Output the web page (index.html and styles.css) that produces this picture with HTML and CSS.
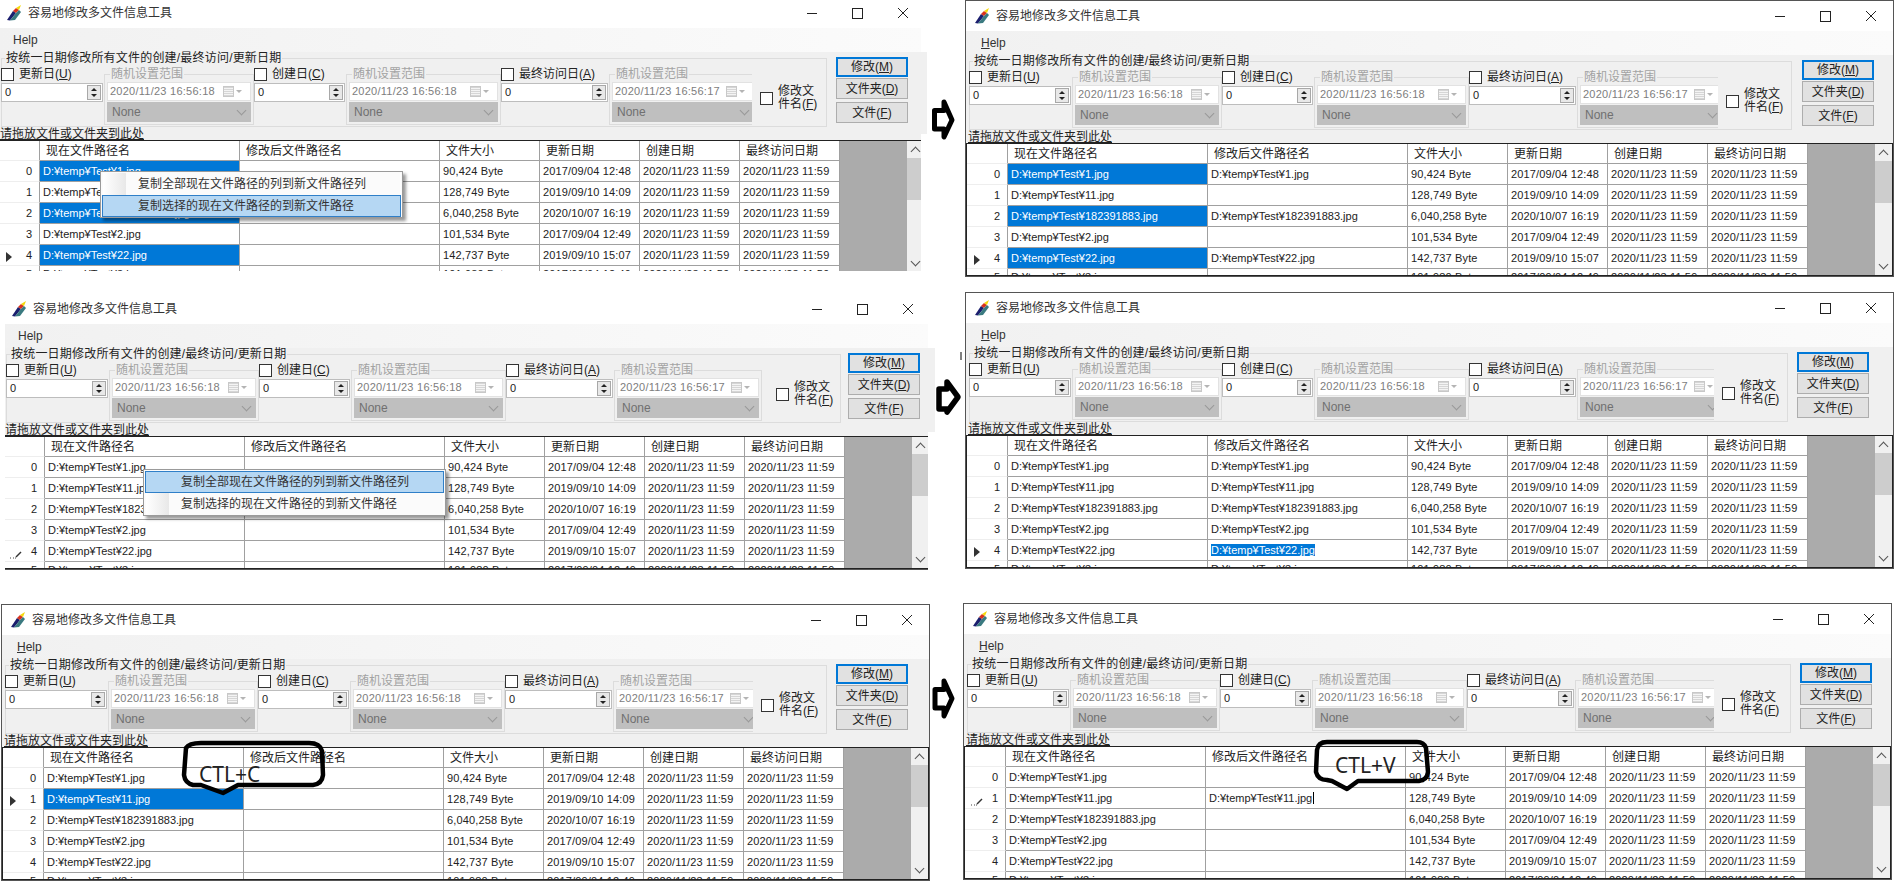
FILE: index.html
```html
<!DOCTYPE html>
<html lang="zh">
<head>
<meta charset="utf-8">
<title>容易地修改多文件信息工具</title>
<link rel="stylesheet" href="styles.css">
</head>
<body>
<svg class="defs" width="0" height="0" aria-hidden="true">
<symbol id="logo" viewBox="0 0 15 16"><path d="M0 15 6 6l3 2-6 7.500z" fill="#1b1f6e"/><path d="M6 6 9 3l3 2-3 3z" fill="#d8321e"/><path d="M9 3 14 0l-2 5z" fill="#f5d90a"/><path d="M3 15.500 9 8l3-3 2 2-6 8z" fill="#3a7a80"/></symbol>
<symbol id="close" viewBox="0 0 10 10"><path d="M0 0 10 10M10 0 0 10" stroke="#222" fill="none"/></symbol>
<symbol id="pencil" viewBox="0 0 12 10"><path d="M0 9h1M3 9h1M5 9h1" stroke="#444"/><path d="M6 8 11 3" stroke="#333" stroke-width="1.500"/></symbol>
</svg>
<main class="canvas">

<section class="win w1">
<header class="title"><svg class="logo"><use href="#logo"/></svg><span>容易地修改多文件信息工具</span><div class="ctrl"><i class="min"></i><i class="max"></i><svg class="x"><use href="#close"/></svg></div></header>
<nav class="menu">Help</nav>
<div class="form"><div class="top">
<fieldset class="fs"><legend>按统一日期修改所有文件的创建/最终访问/更新日期</legend>
<div class="cols">
<div class="dleft a"><label class="chk"><i class="box"></i>更新日(<u>U</u>)</label><div class="num">0<i class="spin"></i></div></div>
<fieldset class="sub a"><legend>随机设置范围</legend><div class="dp">2020/11/23 16:56:18<i class="cal"></i></div><div class="sel">None</div></fieldset>
<div class="dleft b"><label class="chk"><i class="box"></i>创建日(<u>C</u>)</label><div class="num">0<i class="spin"></i></div></div>
<fieldset class="sub b"><legend>随机设置范围</legend><div class="dp">2020/11/23 16:56:18<i class="cal"></i></div><div class="sel">None</div></fieldset>
<div class="dleft c"><label class="chk"><i class="box"></i>最终访问日(<u>A</u>)</label><div class="num">0<i class="spin"></i></div></div>
<fieldset class="sub c"><legend>随机设置范围</legend><div class="dp">2020/11/23 16:56:17<i class="cal"></i></div><div class="sel">None</div></fieldset>
</div>
<label class="ren"><i class="box"></i><span>修改文件名(<u>F</u>)</span></label>
</fieldset>
<div class="btns"><button class="btn def">修改(<u>M</u>)</button><button class="btn">文件夹(<u>D</u>)</button><button class="btn">文件(<u>F</u>)</button></div>
</div><div class="drop">请拖放文件或文件夹到此处</div></div>
<div class="grid"><table>
<tr class="hd"><th class="rh"></th><th>现在文件路径名</th><th>修改后文件路径名</th><th>文件大小</th><th>更新日期</th><th>创建日期</th><th>最终访问日期</th></tr>
<tr><th class="rh">0</th><td class="on">D:¥temp¥Test¥1.jpg</td><td></td><td>90,424 Byte</td><td>2017/09/04 12:48</td><td>2020/11/23 11:59</td><td>2020/11/23 11:59</td></tr>
<tr><th class="rh">1</th><td>D:¥temp¥Test¥11.jpg</td><td></td><td>128,749 Byte</td><td>2019/09/10 14:09</td><td>2020/11/23 11:59</td><td>2020/11/23 11:59</td></tr>
<tr><th class="rh">2</th><td class="on">D:¥temp¥Test¥182391883.jpg</td><td></td><td>6,040,258 Byte</td><td>2020/10/07 16:19</td><td>2020/11/23 11:59</td><td>2020/11/23 11:59</td></tr>
<tr><th class="rh">3</th><td>D:¥temp¥Test¥2.jpg</td><td></td><td>101,534 Byte</td><td>2017/09/04 12:49</td><td>2020/11/23 11:59</td><td>2020/11/23 11:59</td></tr>
<tr><th class="rh"><i class="cur"></i>4</th><td class="on">D:¥temp¥Test¥22.jpg</td><td></td><td>142,737 Byte</td><td>2019/09/10 15:07</td><td>2020/11/23 11:59</td><td>2020/11/23 11:59</td></tr>
<tr><th class="rh">5</th><td>D:¥temp¥Test¥3.jpg</td><td></td><td>101,980 Byte</td><td>2017/09/04 12:49</td><td>2020/11/23 11:59</td><td>2020/11/23 11:59</td></tr>
</table><div class="fill"></div><div class="sb"><i class="up"></i><i class="thumb"></i><i class="dn"></i></div></div>
<div class="cm cm1"><div class="it plain">复制全部现在文件路径的列到新文件路径列</div><div class="it hi">复制选择的现在文件路径的到新文件路径</div></div>
</section>

<section class="win w2">
<header class="title"><svg class="logo"><use href="#logo"/></svg><span>容易地修改多文件信息工具</span><div class="ctrl"><i class="min"></i><i class="max"></i><svg class="x"><use href="#close"/></svg></div></header>
<nav class="menu"><u>H</u>elp</nav>
<div class="form"><div class="top">
<fieldset class="fs"><legend>按统一日期修改所有文件的创建/最终访问/更新日期</legend>
<div class="cols">
<div class="dleft a"><label class="chk"><i class="box"></i>更新日(<u>U</u>)</label><div class="num">0<i class="spin"></i></div></div>
<fieldset class="sub a"><legend>随机设置范围</legend><div class="dp">2020/11/23 16:56:18<i class="cal"></i></div><div class="sel">None</div></fieldset>
<div class="dleft b"><label class="chk"><i class="box"></i>创建日(<u>C</u>)</label><div class="num">0<i class="spin"></i></div></div>
<fieldset class="sub b"><legend>随机设置范围</legend><div class="dp">2020/11/23 16:56:18<i class="cal"></i></div><div class="sel">None</div></fieldset>
<div class="dleft c"><label class="chk"><i class="box"></i>最终访问日(<u>A</u>)</label><div class="num">0<i class="spin"></i></div></div>
<fieldset class="sub c"><legend>随机设置范围</legend><div class="dp">2020/11/23 16:56:17<i class="cal"></i></div><div class="sel">None</div></fieldset>
</div>
<label class="ren"><i class="box"></i><span>修改文件名(<u>F</u>)</span></label>
</fieldset>
<div class="btns"><button class="btn def">修改(<u>M</u>)</button><button class="btn">文件夹(<u>D</u>)</button><button class="btn">文件(<u>F</u>)</button></div>
</div><div class="drop">请拖放文件或文件夹到此处</div></div>
<div class="grid"><table>
<tr class="hd"><th class="rh"></th><th>现在文件路径名</th><th>修改后文件路径名</th><th>文件大小</th><th>更新日期</th><th>创建日期</th><th>最终访问日期</th></tr>
<tr><th class="rh">0</th><td class="on">D:¥temp¥Test¥1.jpg</td><td>D:¥temp¥Test¥1.jpg</td><td>90,424 Byte</td><td>2017/09/04 12:48</td><td>2020/11/23 11:59</td><td>2020/11/23 11:59</td></tr>
<tr><th class="rh">1</th><td>D:¥temp¥Test¥11.jpg</td><td></td><td>128,749 Byte</td><td>2019/09/10 14:09</td><td>2020/11/23 11:59</td><td>2020/11/23 11:59</td></tr>
<tr><th class="rh">2</th><td class="on">D:¥temp¥Test¥182391883.jpg</td><td>D:¥temp¥Test¥182391883.jpg</td><td>6,040,258 Byte</td><td>2020/10/07 16:19</td><td>2020/11/23 11:59</td><td>2020/11/23 11:59</td></tr>
<tr><th class="rh">3</th><td>D:¥temp¥Test¥2.jpg</td><td></td><td>101,534 Byte</td><td>2017/09/04 12:49</td><td>2020/11/23 11:59</td><td>2020/11/23 11:59</td></tr>
<tr><th class="rh"><i class="cur"></i>4</th><td class="on">D:¥temp¥Test¥22.jpg</td><td>D:¥temp¥Test¥22.jpg</td><td>142,737 Byte</td><td>2019/09/10 15:07</td><td>2020/11/23 11:59</td><td>2020/11/23 11:59</td></tr>
<tr><th class="rh">5</th><td>D:¥temp¥Test¥3.jpg</td><td></td><td>101,980 Byte</td><td>2017/09/04 12:49</td><td>2020/11/23 11:59</td><td>2020/11/23 11:59</td></tr>
</table><div class="fill"></div><div class="sb"><i class="up"></i><i class="thumb"></i><i class="dn"></i></div></div>
</section>

<section class="win w3">
<header class="title"><svg class="logo"><use href="#logo"/></svg><span>容易地修改多文件信息工具</span><div class="ctrl"><i class="min"></i><i class="max"></i><svg class="x"><use href="#close"/></svg></div></header>
<nav class="menu">Help</nav>
<div class="form"><div class="top">
<fieldset class="fs"><legend>按统一日期修改所有文件的创建/最终访问/更新日期</legend>
<div class="cols">
<div class="dleft a"><label class="chk"><i class="box"></i>更新日(<u>U</u>)</label><div class="num">0<i class="spin"></i></div></div>
<fieldset class="sub a"><legend>随机设置范围</legend><div class="dp">2020/11/23 16:56:18<i class="cal"></i></div><div class="sel">None</div></fieldset>
<div class="dleft b"><label class="chk"><i class="box"></i>创建日(<u>C</u>)</label><div class="num">0<i class="spin"></i></div></div>
<fieldset class="sub b"><legend>随机设置范围</legend><div class="dp">2020/11/23 16:56:18<i class="cal"></i></div><div class="sel">None</div></fieldset>
<div class="dleft c"><label class="chk"><i class="box"></i>最终访问日(<u>A</u>)</label><div class="num">0<i class="spin"></i></div></div>
<fieldset class="sub c"><legend>随机设置范围</legend><div class="dp">2020/11/23 16:56:17<i class="cal"></i></div><div class="sel">None</div></fieldset>
</div>
<label class="ren"><i class="box"></i><span>修改文件名(<u>F</u>)</span></label>
</fieldset>
<div class="btns"><button class="btn def">修改(<u>M</u>)</button><button class="btn">文件夹(<u>D</u>)</button><button class="btn">文件(<u>F</u>)</button></div>
</div><div class="drop">请拖放文件或文件夹到此处</div></div>
<div class="grid"><table>
<tr class="hd"><th class="rh"></th><th>现在文件路径名</th><th>修改后文件路径名</th><th>文件大小</th><th>更新日期</th><th>创建日期</th><th>最终访问日期</th></tr>
<tr><th class="rh">0</th><td>D:¥temp¥Test¥1.jpg</td><td></td><td>90,424 Byte</td><td>2017/09/04 12:48</td><td>2020/11/23 11:59</td><td>2020/11/23 11:59</td></tr>
<tr><th class="rh">1</th><td>D:¥temp¥Test¥11.jpg</td><td></td><td>128,749 Byte</td><td>2019/09/10 14:09</td><td>2020/11/23 11:59</td><td>2020/11/23 11:59</td></tr>
<tr><th class="rh">2</th><td>D:¥temp¥Test¥182391883.jpg</td><td></td><td>6,040,258 Byte</td><td>2020/10/07 16:19</td><td>2020/11/23 11:59</td><td>2020/11/23 11:59</td></tr>
<tr><th class="rh">3</th><td>D:¥temp¥Test¥2.jpg</td><td></td><td>101,534 Byte</td><td>2017/09/04 12:49</td><td>2020/11/23 11:59</td><td>2020/11/23 11:59</td></tr>
<tr><th class="rh"><svg class="pen"><use href="#pencil"/></svg>4</th><td>D:¥temp¥Test¥22.jpg</td><td></td><td>142,737 Byte</td><td>2019/09/10 15:07</td><td>2020/11/23 11:59</td><td>2020/11/23 11:59</td></tr>
<tr><th class="rh">5</th><td>D:¥temp¥Test¥3.jpg</td><td></td><td>101,980 Byte</td><td>2017/09/04 12:49</td><td>2020/11/23 11:59</td><td>2020/11/23 11:59</td></tr>
</table><div class="fill"></div><div class="sb"><i class="up"></i><i class="thumb"></i><i class="dn"></i></div></div>
<div class="cm cm3"><div class="it hi">复制全部现在文件路径的列到新文件路径列</div><div class="it plain">复制选择的现在文件路径的到新文件路径</div></div>
</section>

<section class="win w4">
<header class="title"><svg class="logo"><use href="#logo"/></svg><span>容易地修改多文件信息工具</span><div class="ctrl"><i class="min"></i><i class="max"></i><svg class="x"><use href="#close"/></svg></div></header>
<nav class="menu"><u>H</u>elp</nav>
<div class="form"><div class="top">
<fieldset class="fs"><legend>按统一日期修改所有文件的创建/最终访问/更新日期</legend>
<div class="cols">
<div class="dleft a"><label class="chk"><i class="box"></i>更新日(<u>U</u>)</label><div class="num">0<i class="spin"></i></div></div>
<fieldset class="sub a"><legend>随机设置范围</legend><div class="dp">2020/11/23 16:56:18<i class="cal"></i></div><div class="sel">None</div></fieldset>
<div class="dleft b"><label class="chk"><i class="box"></i>创建日(<u>C</u>)</label><div class="num">0<i class="spin"></i></div></div>
<fieldset class="sub b"><legend>随机设置范围</legend><div class="dp">2020/11/23 16:56:18<i class="cal"></i></div><div class="sel">None</div></fieldset>
<div class="dleft c"><label class="chk"><i class="box"></i>最终访问日(<u>A</u>)</label><div class="num">0<i class="spin"></i></div></div>
<fieldset class="sub c"><legend>随机设置范围</legend><div class="dp">2020/11/23 16:56:17<i class="cal"></i></div><div class="sel">None</div></fieldset>
</div>
<label class="ren"><i class="box"></i><span>修改文件名(<u>F</u>)</span></label>
</fieldset>
<div class="btns"><button class="btn def">修改(<u>M</u>)</button><button class="btn">文件夹(<u>D</u>)</button><button class="btn">文件(<u>F</u>)</button></div>
</div><div class="drop">请拖放文件或文件夹到此处</div></div>
<div class="grid"><table>
<tr class="hd"><th class="rh"></th><th>现在文件路径名</th><th>修改后文件路径名</th><th>文件大小</th><th>更新日期</th><th>创建日期</th><th>最终访问日期</th></tr>
<tr><th class="rh">0</th><td>D:¥temp¥Test¥1.jpg</td><td>D:¥temp¥Test¥1.jpg</td><td>90,424 Byte</td><td>2017/09/04 12:48</td><td>2020/11/23 11:59</td><td>2020/11/23 11:59</td></tr>
<tr><th class="rh">1</th><td>D:¥temp¥Test¥11.jpg</td><td>D:¥temp¥Test¥11.jpg</td><td>128,749 Byte</td><td>2019/09/10 14:09</td><td>2020/11/23 11:59</td><td>2020/11/23 11:59</td></tr>
<tr><th class="rh">2</th><td>D:¥temp¥Test¥182391883.jpg</td><td>D:¥temp¥Test¥182391883.jpg</td><td>6,040,258 Byte</td><td>2020/10/07 16:19</td><td>2020/11/23 11:59</td><td>2020/11/23 11:59</td></tr>
<tr><th class="rh">3</th><td>D:¥temp¥Test¥2.jpg</td><td>D:¥temp¥Test¥2.jpg</td><td>101,534 Byte</td><td>2017/09/04 12:49</td><td>2020/11/23 11:59</td><td>2020/11/23 11:59</td></tr>
<tr><th class="rh"><i class="cur"></i>4</th><td>D:¥temp¥Test¥22.jpg</td><td><span class="hl">D:¥temp¥Test¥22.jpg</span></td><td>142,737 Byte</td><td>2019/09/10 15:07</td><td>2020/11/23 11:59</td><td>2020/11/23 11:59</td></tr>
<tr><th class="rh">5</th><td>D:¥temp¥Test¥3.jpg</td><td>D:¥temp¥Test¥3.jpg</td><td>101,980 Byte</td><td>2017/09/04 12:49</td><td>2020/11/23 11:59</td><td>2020/11/23 11:59</td></tr>
</table><div class="fill"></div><div class="sb"><i class="up"></i><i class="thumb"></i><i class="dn"></i></div></div>
</section>

<section class="win w5">
<header class="title"><svg class="logo"><use href="#logo"/></svg><span>容易地修改多文件信息工具</span><div class="ctrl"><i class="min"></i><i class="max"></i><svg class="x"><use href="#close"/></svg></div></header>
<nav class="menu"><u>H</u>elp</nav>
<div class="form"><div class="top">
<fieldset class="fs"><legend>按统一日期修改所有文件的创建/最终访问/更新日期</legend>
<div class="cols">
<div class="dleft a"><label class="chk"><i class="box"></i>更新日(<u>U</u>)</label><div class="num">0<i class="spin"></i></div></div>
<fieldset class="sub a"><legend>随机设置范围</legend><div class="dp">2020/11/23 16:56:18<i class="cal"></i></div><div class="sel">None</div></fieldset>
<div class="dleft b"><label class="chk"><i class="box"></i>创建日(<u>C</u>)</label><div class="num">0<i class="spin"></i></div></div>
<fieldset class="sub b"><legend>随机设置范围</legend><div class="dp">2020/11/23 16:56:18<i class="cal"></i></div><div class="sel">None</div></fieldset>
<div class="dleft c"><label class="chk"><i class="box"></i>最终访问日(<u>A</u>)</label><div class="num">0<i class="spin"></i></div></div>
<fieldset class="sub c"><legend>随机设置范围</legend><div class="dp">2020/11/23 16:56:17<i class="cal"></i></div><div class="sel">None</div></fieldset>
</div>
<label class="ren"><i class="box"></i><span>修改文件名(<u>F</u>)</span></label>
</fieldset>
<div class="btns"><button class="btn def">修改(<u>M</u>)</button><button class="btn">文件夹(<u>D</u>)</button><button class="btn">文件(<u>F</u>)</button></div>
</div><div class="drop">请拖放文件或文件夹到此处</div></div>
<div class="grid"><table>
<tr class="hd"><th class="rh"></th><th>现在文件路径名</th><th>修改后文件路径名</th><th>文件大小</th><th>更新日期</th><th>创建日期</th><th>最终访问日期</th></tr>
<tr><th class="rh">0</th><td>D:¥temp¥Test¥1.jpg</td><td></td><td>90,424 Byte</td><td>2017/09/04 12:48</td><td>2020/11/23 11:59</td><td>2020/11/23 11:59</td></tr>
<tr><th class="rh"><i class="cur"></i>1</th><td class="on">D:¥temp¥Test¥11.jpg</td><td></td><td>128,749 Byte</td><td>2019/09/10 14:09</td><td>2020/11/23 11:59</td><td>2020/11/23 11:59</td></tr>
<tr><th class="rh">2</th><td>D:¥temp¥Test¥182391883.jpg</td><td></td><td>6,040,258 Byte</td><td>2020/10/07 16:19</td><td>2020/11/23 11:59</td><td>2020/11/23 11:59</td></tr>
<tr><th class="rh">3</th><td>D:¥temp¥Test¥2.jpg</td><td></td><td>101,534 Byte</td><td>2017/09/04 12:49</td><td>2020/11/23 11:59</td><td>2020/11/23 11:59</td></tr>
<tr><th class="rh">4</th><td>D:¥temp¥Test¥22.jpg</td><td></td><td>142,737 Byte</td><td>2019/09/10 15:07</td><td>2020/11/23 11:59</td><td>2020/11/23 11:59</td></tr>
<tr><th class="rh">5</th><td>D:¥temp¥Test¥3.jpg</td><td></td><td>101,980 Byte</td><td>2017/09/04 12:49</td><td>2020/11/23 11:59</td><td>2020/11/23 11:59</td></tr>
</table><div class="fill"></div><div class="sb"><i class="up"></i><i class="thumb"></i><i class="dn"></i></div></div>
</section>

<section class="win w6">
<header class="title"><svg class="logo"><use href="#logo"/></svg><span>容易地修改多文件信息工具</span><div class="ctrl"><i class="min"></i><i class="max"></i><svg class="x"><use href="#close"/></svg></div></header>
<nav class="menu"><u>H</u>elp</nav>
<div class="form"><div class="top">
<fieldset class="fs"><legend>按统一日期修改所有文件的创建/最终访问/更新日期</legend>
<div class="cols">
<div class="dleft a"><label class="chk"><i class="box"></i>更新日(<u>U</u>)</label><div class="num">0<i class="spin"></i></div></div>
<fieldset class="sub a"><legend>随机设置范围</legend><div class="dp">2020/11/23 16:56:18<i class="cal"></i></div><div class="sel">None</div></fieldset>
<div class="dleft b"><label class="chk"><i class="box"></i>创建日(<u>C</u>)</label><div class="num">0<i class="spin"></i></div></div>
<fieldset class="sub b"><legend>随机设置范围</legend><div class="dp">2020/11/23 16:56:18<i class="cal"></i></div><div class="sel">None</div></fieldset>
<div class="dleft c"><label class="chk"><i class="box"></i>最终访问日(<u>A</u>)</label><div class="num">0<i class="spin"></i></div></div>
<fieldset class="sub c"><legend>随机设置范围</legend><div class="dp">2020/11/23 16:56:17<i class="cal"></i></div><div class="sel">None</div></fieldset>
</div>
<label class="ren"><i class="box"></i><span>修改文件名(<u>F</u>)</span></label>
</fieldset>
<div class="btns"><button class="btn def">修改(<u>M</u>)</button><button class="btn">文件夹(<u>D</u>)</button><button class="btn">文件(<u>F</u>)</button></div>
</div><div class="drop">请拖放文件或文件夹到此处</div></div>
<div class="grid"><table>
<tr class="hd"><th class="rh"></th><th>现在文件路径名</th><th>修改后文件路径名</th><th>文件大小</th><th>更新日期</th><th>创建日期</th><th>最终访问日期</th></tr>
<tr><th class="rh">0</th><td>D:¥temp¥Test¥1.jpg</td><td></td><td>90,424 Byte</td><td>2017/09/04 12:48</td><td>2020/11/23 11:59</td><td>2020/11/23 11:59</td></tr>
<tr><th class="rh"><svg class="pen"><use href="#pencil"/></svg>1</th><td>D:¥temp¥Test¥11.jpg</td><td><span class="caret">D:¥temp¥Test¥11.jpg</span></td><td>128,749 Byte</td><td>2019/09/10 14:09</td><td>2020/11/23 11:59</td><td>2020/11/23 11:59</td></tr>
<tr><th class="rh">2</th><td>D:¥temp¥Test¥182391883.jpg</td><td></td><td>6,040,258 Byte</td><td>2020/10/07 16:19</td><td>2020/11/23 11:59</td><td>2020/11/23 11:59</td></tr>
<tr><th class="rh">3</th><td>D:¥temp¥Test¥2.jpg</td><td></td><td>101,534 Byte</td><td>2017/09/04 12:49</td><td>2020/11/23 11:59</td><td>2020/11/23 11:59</td></tr>
<tr><th class="rh">4</th><td>D:¥temp¥Test¥22.jpg</td><td></td><td>142,737 Byte</td><td>2019/09/10 15:07</td><td>2020/11/23 11:59</td><td>2020/11/23 11:59</td></tr>
<tr><th class="rh">5</th><td>D:¥temp¥Test¥3.jpg</td><td></td><td>101,980 Byte</td><td>2017/09/04 12:49</td><td>2020/11/23 11:59</td><td>2020/11/23 11:59</td></tr>
</table><div class="fill"></div><div class="sb"><i class="up"></i><i class="thumb"></i><i class="dn"></i></div></div>
</section>

<svg class="arrow a1" viewBox="0 0 44 280"><path d="M0 0H44V280H0V134H6V52H0Z" fill="#fff"/><path d="M13.500 110.500H23V102L31 120L23 137V129H13.500Z" fill="#fff" stroke="#000" stroke-width="5" stroke-linejoin="round"/></svg>
<svg class="arrow a2" viewBox="0 0 37 285"><path d="M0 0H37V285H0V142H8V58H0Z" fill="#fff"/><path d="M11 99H19V92L30 107L19 122V119H11Z" fill="#fff" stroke="#000" stroke-width="5.500" stroke-linejoin="round"/><path d="M33 62v8" stroke="#000"/></svg>
<svg class="arrow a3" viewBox="0 0 30 50"><path d="M5 15.500H14V7L22 24.500L14 42V34H5Z" fill="#fff" stroke="#000" stroke-width="5" stroke-linejoin="round"/></svg>

<div class="callout cc"><svg viewBox="0 0 148 58"><path d="M20 4Q8 4 5 9L3 36Q4 44 12 46L20 46L42 54L57 46H132Q141 45 142 36L141 12Q139 4 128 4Z" fill="none" stroke="#000" stroke-width="4.500" stroke-linejoin="round"/></svg><span>CTL+C</span></div>
<div class="callout cv"><svg viewBox="0 0 118 56"><path d="M14 4Q5 4 4 12L3 34Q5 42 14 42L19 43L34 51L45 43H106Q114 42 115 34L113 10Q111 4 104 4Z" fill="none" stroke="#000" stroke-width="4.500" stroke-linejoin="round"/></svg><span>CTL+V</span></div>
</main>
</body>
</html>
```

FILE: styles.css
```css
* { box-sizing: border-box; }
html, body { margin: 0; padding: 0; background: #fff; }
.defs { position: absolute; }
.canvas {
  position: relative;
  width: 1896px;
  height: 896px;
  overflow: hidden;
  background: #fff;
  font: 12px/14px "Liberation Sans", "Noto Sans CJK JP", sans-serif;
  color: #222;
}

/* windows on the free canvas */
.win {
  position: absolute;
  width: 929px;
  height: 277px;
  border: 1px solid #555;
  background: #fff;
  display: flex;
  flex-direction: column;
}
.w1 { left: -3px; top: -3px; --fw: 826px; --bm: 9px; --clip: 751px; --rm: 8px; clip-path: inset(0 -10px 3px 0); }
.w2 { left: 965px; top: 0; --fw: 823px; --bm: 10px; --clip: 749px; --rm: 8px; }
.w3 { left: 2px; top: 293px; --fw: 835px; --bm: 7px; --clip: 758px; --rm: 12px; clip-path: inset(3px -10px 0 3px); }
.w4 { left: 965px; top: 292px; --fw: 819px; --bm: 9px; --clip: 745px; --rm: 8px; }
.w5 { left: 1px; top: 604px; --fw: 822px; --bm: 9px; --clip: 748px; --rm: 8px; }
.w6 { left: 963px; top: 603px; --fw: 824px; --bm: 9px; --clip: 747px; --rm: 8px; }

.title { flex: none; height: 30px; display: flex; align-items: center; padding: 0 17px 0 9px; background: #fff; color: #333; }
.logo { width: 15px; height: 16px; margin-right: 6px; }
.ctrl { margin-left: auto; display: flex; align-items: center; gap: 35px; }
.min { display: block; width: 10px; height: 1px; background: #222; }
.max { display: block; width: 11px; height: 11px; border: 1px solid #222; }
.x { display: block; width: 10px; height: 10px; }

.menu { flex: none; height: 24px; line-height: 24px; padding-left: 15px; background: linear-gradient(90deg, #f1f1f1, #fbfbfb); color: #333; font-size: 12px; }

.form { flex: none; height: 88px; background: #f0f0f0; display: flex; flex-direction: column; }
.w1 .form { margin-right: -2px; }
.w3 .form { margin-right: -5px; }
.top { height: 75px; flex: none; display: flex; padding-left: 3px; }
.drop { height: 13px; line-height: 15px; padding-left: 2px; text-decoration: underline; white-space: nowrap; }

.fs { flex: none; width: var(--fw); height: 76px; margin: -1px 0 0; padding: 0; border: 1px solid #dcdcdc; display: flex; }
.fs > legend { margin-left: 3px; padding: 0 1px; height: 14px; line-height: 14px; letter-spacing: .2px; white-space: nowrap; }
.cols { flex: none; display: flex; width: var(--clip); height: 60px; margin-left: -1px; overflow: hidden; }

.dleft { flex: none; padding-top: 3px; }
.dleft.a { width: 103px; }
.dleft.b { width: 92px; }
.dleft.c { width: 108px; }
.chk { display: block; height: 13px; line-height: 13px; white-space: nowrap; }
.box { display: block; flex: none; width: 13px; height: 13px; border: 1px solid #333; background: #fff; }
.chk .box { display: inline-block; vertical-align: top; margin-right: 5px; }
.num { position: relative; width: calc(100% - 1px); height: 19px; margin-top: 2px; padding-left: 3px; line-height: 16px; font-size: 11px; background: #fff; border: 1px solid #bdbdbd; }
.spin { position: absolute; right: 1px; top: 1px; width: 14px; height: 15px; background: #e8e8e8; border: 1px solid #a8a8a8; }
.spin::before, .spin::after { content: ""; position: absolute; left: 3px; border-left: 3px solid transparent; border-right: 3px solid transparent; }
.spin::before { top: 2px; border-bottom: 3px solid #222; }
.spin::after { bottom: 2px; border-top: 3px solid #222; }

.sub { flex: none; height: 58px; margin: 2px 0 0; padding: 0 2px; border: 1px solid #dcdcdc; }
.sub.a { width: 150px; }
.sub.b { width: 155px; }
.sub.c { width: 148px; }
.sub > legend { margin-left: 3px; padding: 0 1px; height: 14px; line-height: 14px; color: #a3a3a3; white-space: nowrap; }
.dp { position: relative; height: 19px; margin-top: 1px; padding-left: 2px; line-height: 17px; font-size: 11px; letter-spacing: .25px; color: #7d7d7d; background: #fff; border: 1px solid #e2e2e2; white-space: nowrap; }
.cal { position: absolute; right: 16px; top: 3px; width: 11px; height: 11px; border: 1px solid #c8c8c8; background: repeating-linear-gradient(0deg, #d6d6d6 0 1px, #f4f4f4 1px 2px); }
.cal::after { content: ""; position: absolute; left: 12px; top: 3px; border-left: 3px solid transparent; border-right: 3px solid transparent; border-top: 3px solid #b4b4b4; }
.sel { position: relative; height: 20px; margin-top: 1px; padding-left: 5px; line-height: 20px; font-size: 12px; color: #707070; background: #bfbfbf; }
.sel::after { content: ""; position: absolute; right: 6px; top: 5px; width: 6px; height: 6px; border-right: 1px solid #999; border-bottom: 1px solid #999; transform: rotate(45deg); }

.ren { flex: none; display: flex; gap: 5px; margin-left: var(--rm); padding-top: 20px; }
.ren .box { margin-top: 7px; }
.ren span { display: block; width: 44px; line-height: 13px; }

.btns { flex: none; margin-left: var(--bm); padding-top: 5px; display: flex; flex-direction: column; }
.btn { display: block; width: 72px; height: 21px; padding: 0; font: inherit; line-height: 14px; color: #222; background: #e1e1e1; border: 1px solid #adadad; border-radius: 0; }
.btn.def { height: 20px; border: 2px solid #0078d7; }
.btn + .btn { margin-top: 1px; }
.btn + .btn + .btn { margin-top: 3px; }

.grid { flex: none; height: 133px; display: flex; overflow: hidden; background: #ababab; border: 1px solid #222; }
table { flex: none; width: 841px; height: 132px; border-collapse: separate; border-spacing: 0; table-layout: fixed; background: #fff; }
tr { height: 21px; }
tr.hd { height: 20px; }
th, td { padding: 0; border-right: 1px solid #a0a0a0; border-bottom: 1px solid #a0a0a0; white-space: nowrap; overflow: hidden; }
th { width: 100px; font-weight: 400; text-align: left; padding: 1px 0 0 6px; line-height: 16px; }
tr.hd th:nth-child(1) { width: 41px; }
tr.hd th:nth-child(2), tr.hd th:nth-child(3) { width: 200px; }
th.rh { padding: 0 7px 0 7px; text-align: right; font-size: 11px; border-bottom-color: #eee; }
td { padding-left: 3px; font-size: 11px; letter-spacing: .15px; line-height: 20px; }
td:nth-of-type(1), td:nth-of-type(2) { letter-spacing: 0; }
tr:last-child td, tr:last-child th { vertical-align: top; line-height: 16px; }
td.on { background: #0078d7; color: #fff; }
.hl { background: #0078d7; color: #fff; }
.caret { padding-right: 1px; border-right: 1px solid #000; }
.cur { float: left; margin-top: 5px; border-left: 6px solid #333; border-top: 5px solid transparent; border-bottom: 5px solid transparent; }
.pen { float: left; width: 12px; height: 10px; margin: 6px 0 0 -1px; }

.fill { flex: 1; background: #ababab; }
.sb { flex: none; width: 17px; display: flex; flex-direction: column; background: #f0f0f0; }
.sb i { display: block; flex: none; }
.up, .dn { position: relative; height: 17px; }
.up::after, .dn::after { content: ""; position: absolute; left: 5px; width: 6px; height: 6px; border-left: 1.500px solid #555; border-top: 1.500px solid #555; transform: rotate(45deg); }
.up::after { top: 7px; }
.dn::after { top: 3px; transform: rotate(225deg); }
.thumb { height: 42px; background: #cdcdcd; }
.dn { margin-top: auto; }

/* context menus lie over the grid */
.cm { position: absolute; width: 303px; height: 47px; padding: 1px; background: #fbfbfb; border: 1px solid #9a9a9a; box-shadow: 3px 3px 3px rgba(0, 0, 0, .4); }
.cm1 { left: 102px; top: 173px; }
.cm3 { left: 140px; top: 175px; }
.it { height: 22px; padding-left: 35px; line-height: 20px; color: #333; border: 1px solid transparent; white-space: nowrap; }
.it.plain { background: linear-gradient(90deg, #fff, #e8e8e8 23px, #fbfbfb 23px); }
.it.hi { background: #b5d7f3; border-color: #2f7fc8; }

/* annotations pasted over the picture */
.arrow { position: absolute; display: block; }
.a1 { left: 921px; top: 0; width: 44px; height: 280px; }
.a2 { left: 928px; top: 290px; width: 37px; height: 285px; }
.a3 { left: 930px; top: 674px; width: 30px; height: 50px; }

.callout { position: absolute; color: #222; font-family: "Noto Sans", sans-serif; font-size: 21px; line-height: 24px; white-space: nowrap; }
.callout svg { display: block; width: 100%; height: 100%; }
.callout span { position: absolute; }
.cc { left: 181px; top: 739px; width: 148px; height: 58px; }
.cc span { left: 18px; top: 23px; }
.cv { left: 1313px; top: 738px; width: 118px; height: 56px; }
.cv span { left: 22px; top: 15px; }
```
